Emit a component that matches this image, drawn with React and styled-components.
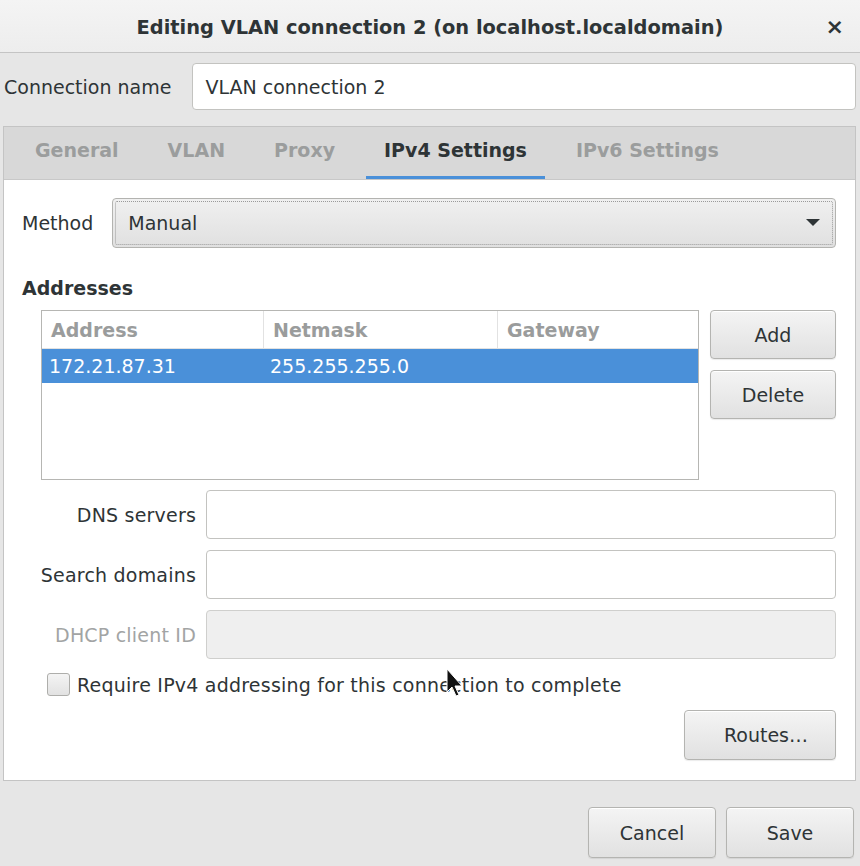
import React from "react";
import styled, { createGlobalStyle } from "styled-components";

const Global = createGlobalStyle`
  html, body { margin: 0; padding: 0; background: #e6e6e6; }
  body { font-family: "DejaVu Sans", "Noto Sans", sans-serif; font-size: 19px; color: #2e3436; }
  * { box-sizing: border-box; }
`;

const Window = styled.div`
  position: relative;
  width: 860px;
  height: 866px;
  display: flex;
  flex-direction: column;
  background: #e6e6e6;
  overflow: hidden;
`;

const TitleBar = styled.div`
  height: 53px;
  flex: none;
  display: flex;
  align-items: center;
  justify-content: center;
  position: relative;
  background: linear-gradient(#f4f4f4, #ededed);
  border-bottom: 1px solid #c4c4c4;
  padding-top: 2px;
`;

const Title = styled.div`
  font-weight: bold;
  font-size: 19.4px;
  color: #2e3436;
`;

const Close = styled.div`
  position: absolute;
  right: 16px;
  top: 14px;
  font-weight: bold;
  font-size: 22px;
  color: #2e3436;
`;

const NameRow = styled.div`
  display: flex;
  align-items: center;
  gap: 21px;
  padding: 10px 4px 0 4px;
`;

const Label = styled.div`
  color: ${(p) => (p.$disabled ? "#a2a4a4" : "#2e3436")};
  text-align: ${(p) => (p.$right ? "right" : "left")};
  white-space: nowrap;
  letter-spacing: ${(p) => p.$ls || 0}px;
`;

const TextInput = styled.div`
  flex: 1;
  height: ${(p) => p.$h || 49}px;
  display: flex;
  align-items: center;
  padding-left: 12px;
  background: ${(p) => (p.$disabled ? "#efefef" : "#ffffff")};
  border: 1px solid ${(p) => (p.$disabled ? "#cfcfcd" : "#c3c3c0")};
  border-radius: 4px;
  color: #2e3436;
`;

const Notebook = styled.div`
  margin: 16px 4px 0 3px;
  border: 1px solid #c4c4c4;
  display: flex;
  flex-direction: column;
`;

const TabBar = styled.div`
  height: 53px;
  display: flex;
  gap: 13px;
  padding-left: 13px;
  background: #d8d8d8;
  border-bottom: 1px solid #c8c8c8;
`;

const Tab = styled.div`
  padding: 0 18px 4px;
  display: flex;
  align-items: center;
  font-weight: bold;
  color: ${(p) => (p.$active ? "#2e3436" : "#9b9d9d")};
  border-bottom: 3px solid ${(p) => (p.$active ? "#4a90d9" : "transparent")};
`;

const Panel = styled.div`
  background: #ffffff;
  padding: 18px 19px 20px 18px;
  display: flex;
  flex-direction: column;
`;

const MethodRow = styled.div`
  display: flex;
  align-items: center;
  gap: 19px;
`;

const Combo = styled.div`
  position: relative;
  flex: 1;
  height: 50px;
  display: flex;
  align-items: center;
  justify-content: space-between;
  padding: 0 15px 0 15px;
  background: linear-gradient(#f0f0f0, #e0e0e0);
  border: 1px solid #b3b3b0;
  border-radius: 4px;
  &::after {
    content: "";
    position: absolute;
    inset: 2px;
    border: 1px dotted #9a9a9a;
    border-radius: 2px;
  }
`;

const Heading = styled.div`
  font-weight: bold;
  margin-top: 29px;
  line-height: 22px;
`;

const AddrSection = styled.div`
  margin-left: 19px;
  margin-top: 11px;
  display: flex;
  gap: 11px;
`;

const Table = styled.div`
  width: 658px;
  height: 170px;
  border: 1px solid #b6b6b3;
  background: #fff;
`;

const Row = styled.div`
  display: grid;
  grid-template-columns: 221px 234px 1fr;
  height: ${(p) => (p.$head ? 38 : 34)}px;
  background: ${(p) => (p.$selected ? "#4a90d9" : "transparent")};
  border-bottom: ${(p) => (p.$head ? "1px solid #e2e2e2" : "none")};
`;

const Cell = styled.div`
  display: flex;
  align-items: center;
  padding-left: ${(p) => (p.$head ? 9 : 7)}px;
  font-weight: ${(p) => (p.$head ? "bold" : "normal")};
  color: ${(p) => (p.$head ? "#9a9c9c" : p.$selected ? "#ffffff" : "#2e3436")};
  border-left: ${(p) => (p.$sep ? "1px solid #e2e2e2" : "none")};
`;

const ButtonCol = styled.div`
  display: flex;
  flex-direction: column;
  gap: 11px;
`;

const Button = styled.div`
  width: ${(p) => p.$w}px;
  height: ${(p) => p.$h || 49}px;
  flex: none;
  display: flex;
  align-items: center;
  justify-content: center;
  background: linear-gradient(#f4f4f4, #e1e1e1);
  border: 1px solid #b4b4b1;
  border-radius: 4px;
  box-shadow: inset 0 1px #ffffff, 0 1px 1px rgba(0,0,0,0.08);
  color: #2e3436;
  padding-left: ${(p) => p.$pl || 0}px;
`;

const FormGrid = styled.div`
  margin: 10px 0 0 16px;
  display: grid;
  grid-template-columns: 158px 1fr;
  column-gap: 10px;
  row-gap: 11px;
  align-items: center;
`;

const CheckRow = styled.div`
  margin: 14px 0 0 25px;
  display: flex;
  align-items: center;
  gap: 7px;
`;

const CheckBox = styled.div`
  width: 23px;
  height: 23px;
  flex: none;
  border: 1px solid #aeaeab;
  border-radius: 3px;
  background: linear-gradient(#f4f4f4, #e2e2e2);
`;

const RoutesRow = styled.div`
  margin-top: 14px;
  display: flex;
  justify-content: flex-end;
`;

const Footer = styled.div`
  display: flex;
  justify-content: flex-end;
  gap: 10px;
  padding: 26px 6px 0 0;
`;

const Cursor = styled.svg`
  position: absolute;
  left: 446px;
  top: 668px;
`;

export default function App() {
  return (
    <>
      <Global />
      <Window>
        <TitleBar>
          <Title>Editing VLAN connection 2 (on localhost.localdomain)</Title>
          <Close>×</Close>
        </TitleBar>
        <NameRow>
          <Label>Connection name</Label>
          <TextInput $h={47}>VLAN connection 2</TextInput>
        </NameRow>
        <Notebook>
          <TabBar>
            <Tab>General</Tab>
            <Tab>VLAN</Tab>
            <Tab>Proxy</Tab>
            <Tab $active>IPv4 Settings</Tab>
            <Tab>IPv6 Settings</Tab>
          </TabBar>
          <Panel>
            <MethodRow>
              <Label>Method</Label>
              <Combo>
                <span>Manual</span>
                <svg width="14" height="8" viewBox="0 0 14 8">
                  <path d="M0 0 L14 0 L7 7 Z" fill="#2e3436" />
                </svg>
              </Combo>
            </MethodRow>
            <Heading>Addresses</Heading>
            <AddrSection>
              <Table>
                <Row $head>
                  <Cell $head>Address</Cell>
                  <Cell $head $sep>Netmask</Cell>
                  <Cell $head $sep>Gateway</Cell>
                </Row>
                <Row $selected>
                  <Cell $selected>172.21.87.31</Cell>
                  <Cell $selected>255.255.255.0</Cell>
                  <Cell $selected></Cell>
                </Row>
              </Table>
              <ButtonCol>
                <Button $w={126}>Add</Button>
                <Button $w={126}>Delete</Button>
              </ButtonCol>
            </AddrSection>
            <FormGrid>
              <Label $right $ls={0.2}>DNS servers</Label>
              <TextInput />
              <Label $right $ls={0.2}>Search domains</Label>
              <TextInput />
              <Label $right $disabled $ls={0.2}>DHCP client ID</Label>
              <TextInput $disabled />
            </FormGrid>
            <CheckRow>
              <CheckBox />
              <Label $ls={0.22}>Require IPv4 addressing for this connection to complete</Label>
            </CheckRow>
            <RoutesRow>
              <Button $w={152} $h={50} $pl={12}>Routes…</Button>
            </RoutesRow>
          </Panel>
        </Notebook>
        <Footer>
          <Button $w={128} $h={51}>Cancel</Button>
          <Button $w={128} $h={51}>Save</Button>
        </Footer>
        <Cursor width="18" height="30" viewBox="0 0 18 30">
          <path d="M1 1 L1 24 L6 19 L10 28 L13 27 L9 18 L16 18 Z" fill="#111" stroke="#fff" strokeWidth="1" />
        </Cursor>
      </Window>
    </>
  );
}
